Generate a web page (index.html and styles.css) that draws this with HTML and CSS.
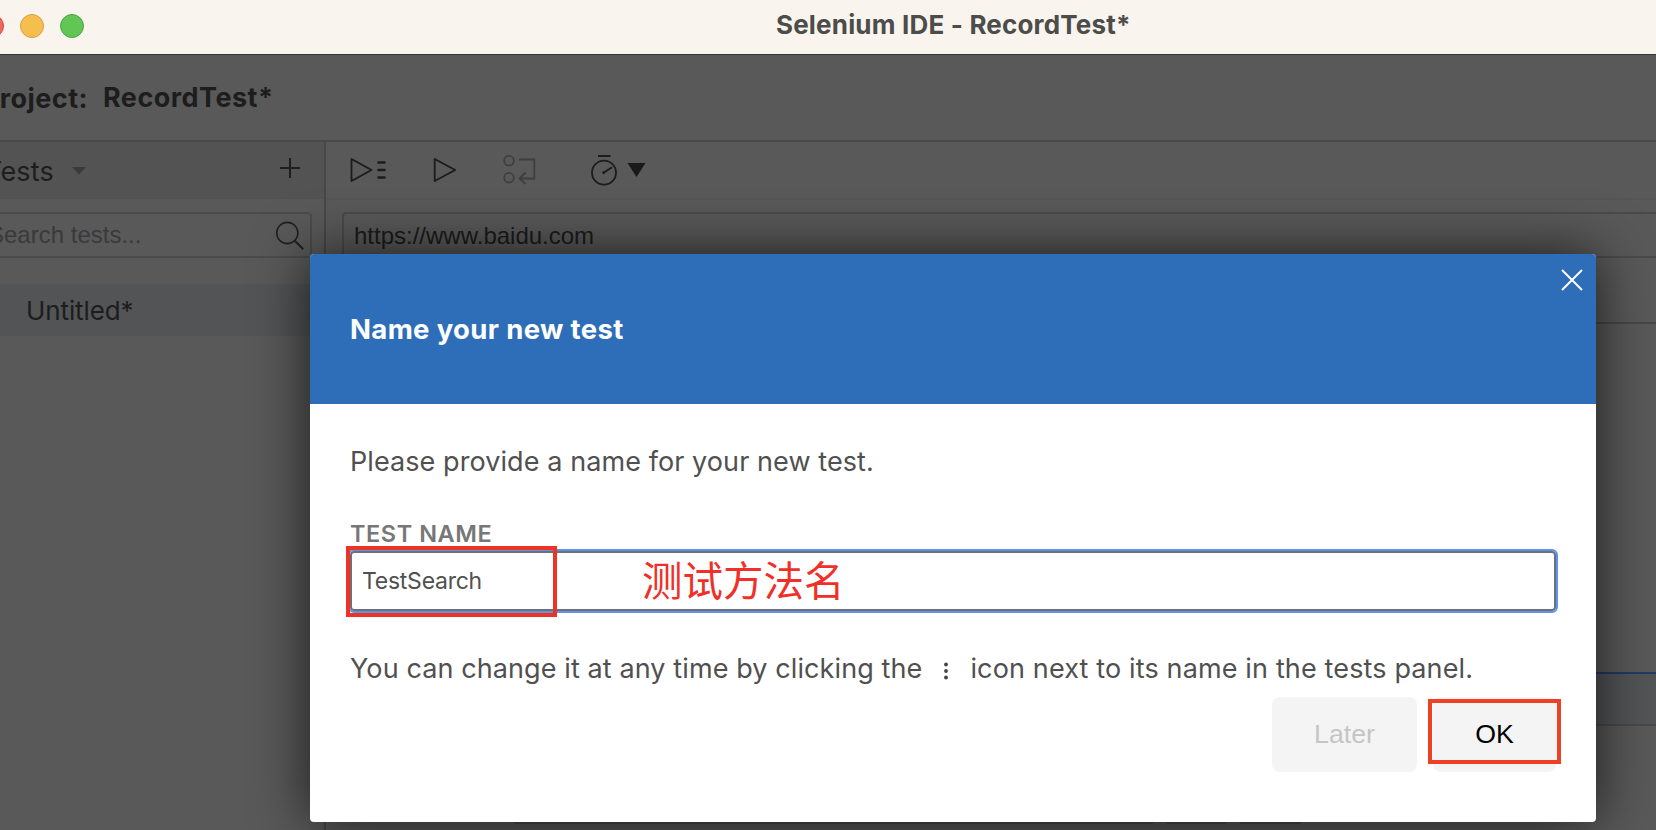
FILE: index.html
```html
<!DOCTYPE html>
<html lang="en">
<head>
<meta charset="utf-8">
<title>Selenium IDE - RecordTest*</title>
<link rel="stylesheet" href="styles.css">
</head>
<body>
<div class="window">
  <header class="titlebar">
    <div class="lights"><i class="light red"></i><i class="light yellow"></i><i class="light green"></i></div>
    <span class="window-title">Selenium IDE - RecordTest*</span>
  </header>
  <div class="project"><span class="project-label">Project:</span><span class="project-name">RecordTest*</span></div>
  <div class="main">
    <aside class="sidebar">
      <div class="tests-head">
        <span class="tests-title">Tests</span>
        <svg class="caret" width="14" height="8" viewBox="0 0 14 8"><path d="M0 0h14L7 7.500z" fill="#3a3a3a"/></svg>
        <svg class="plus" width="20" height="20" viewBox="0 0 20 20"><path d="M10 0v20M0 10h20" stroke="#1e1e1e" stroke-width="2"/></svg>
      </div>
      <div class="search">
        <span class="search-text">Search tests...</span>
        <svg class="magnifier" width="30" height="30" viewBox="0 0 30 30" fill="none" stroke="#202020" stroke-width="1.600"><circle cx="12.300" cy="12" r="10.600"/><path d="M19.500 19.500 28.300 28.300" stroke-width="2"/></svg>
      </div>
      <div class="test-row"><span class="test-name">Untitled*</span></div>
    </aside>
    <section class="editor">
      <div class="toolbar">
        <svg width="330" height="56" viewBox="0 0 330 56" fill="none" stroke="#1c1c1c" stroke-width="1.800" stroke-linejoin="round">
          <path d="M25.500 17v22L45.500 28z"/>
          <path d="M52.500 20.500h6M52.500 28h6M52.500 35.500h6" stroke-width="2.600" stroke-linecap="round"/>
          <path d="M108.700 17v22l20.500-11z"/>
          <g stroke="#3f3f3f"><circle cx="183" cy="18.700" r="4.800"/><circle cx="183" cy="35.700" r="4.800"/><path d="M193 17.500h15.300v19H194M199.500 30.500l-6 6 6 5.500" stroke-linejoin="miter"/></g>
          <circle cx="278" cy="30.700" r="12"/>
          <path d="M272 14h12.500" stroke-width="2"/>
          <path d="M278 30.500l8-5.300"/><circle cx="277.700" cy="30.500" r="1.500" fill="#1c1c1c" stroke="none"/>
          <path d="M301.500 21h18L310.500 35z" fill="#1a1a1a" stroke="none"/>
        </svg>
      </div>
      <div class="url-area"><div class="url"><span class="url-text">https://www.baidu.com</span></div></div>
      <div class="commands-head"></div>
      <div class="commands"></div>
      <div class="command-row"></div>
      <div class="form-area"><i class="field field-wide"></i><i class="field"></i><i class="field"></i></div>
    </section>
  </div>
</div>

<div class="modal">
  <div class="modal-head">
    <h1 class="modal-title">Name your new test</h1>
    <svg class="close" width="22" height="22" viewBox="0 0 22 22"><path d="M1 1l20 20M21 1 1 21" stroke="#fff" stroke-width="1.900"/></svg>
  </div>
  <div class="modal-body">
    <p class="prompt">Please provide a name for your new test.</p>
    <label class="label">TEST NAME</label>
    <div class="input"><span class="input-text">TestSearch</span></div>
    <p class="hint"><span class="hint-a">You can change it at any time by clicking the</span>
      <svg class="dots" width="6" height="20" viewBox="0 0 6 20" fill="#444"><circle cx="3" cy="3.500" r="1.900"/><circle cx="3" cy="10" r="1.900"/><circle cx="3" cy="16.500" r="1.900"/></svg>
      <span class="hint-b">icon next to its name in the tests panel.</span></p>
    <div class="actions"><div class="button later">Later</div><div class="button ok">OK</div></div>
  </div>
  <div class="mark mark-input"></div>
  <div class="mark mark-ok"></div>
  <div class="note">测试方法名</div>
</div>
</body>
</html>
```

FILE: styles.css
```css
* { box-sizing: border-box; }
body { margin: 0; font-family: Inter, "Liberation Sans", sans-serif; overflow: hidden; background: #595959; }
svg, i { display: block; flex: none; }
span { white-space: nowrap; }
.window { width: 1656px; height: 830px; display: flex; flex-direction: column; overflow: hidden; }
.titlebar { height: 55px; flex: none; background: #f9f4ee; border-bottom: 1px solid #333; display: grid; grid-template-columns: 776px 1fr; align-items: center; }
.lights { display: flex; gap: 16px; margin-left: -20px; margin-top: -2px; }
.light { width: 24px; height: 24px; border-radius: 50%; border: 1px solid; }
.red { background: #ee6a5f; border-color: #d5493f; }
.yellow { background: #f5bf50; border-color: #d9a03a; }
.green { background: #62c655; border-color: #4ba73f; }
.window-title { font-size: 26px; font-weight: 700; line-height: 32px; color: #4c4c4a; margin-top: -4px; letter-spacing: .18px; }
.project { height: 87px; flex: none; border-bottom: 2px solid #494949; display: flex; align-items: center; color: #1d1d1d; font-weight: 700; font-size: 27px; letter-spacing: .46px; }
.project-label { width: 103px; padding-right: 15px; display: flex; justify-content: flex-end; padding-top: 2px; }
.main { flex: 1; display: flex; min-height: 0; }
.sidebar { width: 326px; border-right: 2px solid #474747; overflow: hidden; }
.tests-head { height: 57px; background: #535353; display: flex; align-items: center; color: #1d1d1d; font-size: 27px; letter-spacing: .2px; }
.tests-title { width: 54px; display: flex; justify-content: flex-end; padding-top: 2px; }
.caret { margin-left: 18px; }
.plus { margin-left: 194px; margin-top: -5px; }
.search { height: 46px; width: 316px; margin: 13px 0 0 -4px; border: 2px solid #4b4b4b; border-radius: 4px; display: flex; align-items: center; font: 24px "Liberation Sans", sans-serif; color: #3a3a3a; }
.search-text { width: 284px; margin-left: -10px; }
.magnifier { margin-left: 3px; margin-top: 1px; }
.test-row { margin-top: 26px; height: 52px; background: #525455; display: flex; align-items: center; padding-left: 26px; font-size: 26px; letter-spacing: -.1px; color: #1d1d1d; }
.editor { flex: 1; min-width: 0; display: flex; flex-direction: column; }
.toolbar { height: 58px; border-bottom: 2px solid #555; }
.url-area { padding: 12px 0 0 16px; }
.url { height: 46px; border: 2px solid #4a4a4a; border-right: 0; border-radius: 4px 0 0 4px; padding: 2px 0 0 10px; display: flex; align-items: center; font: 24px "Liberation Sans", sans-serif; color: #1b1b1b; }
.commands-head { height: 66px; border-bottom: 2px solid #474747; }
.commands { height: 350px; border-bottom: 2px solid #223a66; }
.command-row { height: 52px; background: #525455; border-bottom: 2px solid #494949; }
.form-area { flex: 1; display: flex; align-items: flex-start; gap: 11px; padding: 52px 0 0 187px; overflow: hidden; }
.field { height: 46px; width: 63px; border-radius: 4px; border: 2px solid #494949; }
.field-wide { width: 641px; }

.modal { position: absolute; left: 310px; top: 254px; width: 1286px; height: 568px; border-radius: 4px; background: #fff; box-shadow: 0 0 56px rgba(0,0,0,.7); }
.modal-head { height: 150px; background: #2e6eb9; border-radius: 4px 4px 0 0; display: flex; justify-content: space-between; padding: 15px 13px 0 40px; }
.modal-title { margin: 43px 0 0; font-size: 27.500px; line-height: 34px; color: #fff; font-weight: 700; letter-spacing: .35px; white-space: nowrap; }
.modal-body { padding: 40px 40px 0; color: #505050; display: flex; flex-direction: column; }
.prompt, .hint { margin: 0; font-size: 27px; line-height: 36px; white-space: nowrap; }
.prompt { letter-spacing: .08px; }
.label { margin-top: 38px; font-size: 23.500px; line-height: 31px; font-weight: 600; letter-spacing: .55px; color: #777; white-space: nowrap; }
.input { height: 60px; margin-top: 2px; border: 2px solid #707070; border-radius: 4px; outline: 2px solid #5b93f5; padding-left: 10px; display: flex; align-items: center; font-size: 23px; letter-spacing: -.25px; }
.hint { margin-top: 40px; display: flex; align-items: center; }
.hint-a { letter-spacing: .1px; }
.dots { margin-left: 21px; margin-top: 4px; }
.hint-b { margin-left: 21px; letter-spacing: .14px; }
.actions { display: flex; justify-content: flex-end; gap: 16px; margin-top: 10px; }
.button { height: 75px; width: 145px; border-radius: 8px; background: #f4f4f4; font: 26.700px "Liberation Sans", sans-serif; display: flex; align-items: center; justify-content: center; padding-bottom: 1px; color: #c5c5c5; }
.ok { width: 123px; color: #000; }
.mark { position: absolute; border: 4px solid #ee3226; }
.mark-input { left: 36px; top: 292px; width: 211px; height: 71px; }
.mark-ok { left: 1118px; top: 445px; width: 133px; height: 65px; border-color: #ee4024; }
.note { position: absolute; left: 332px; top: 296px; font: 40.500px/58px "Noto Sans CJK SC", sans-serif; color: #f03028; white-space: nowrap; }
```
